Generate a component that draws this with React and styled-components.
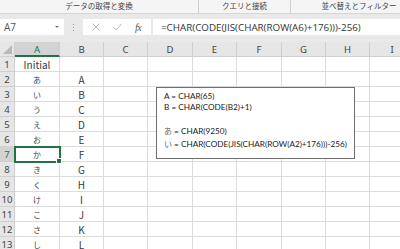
import React from "react";
import styled, { createGlobalStyle } from "styled-components";

const Global = createGlobalStyle`
  html, body { margin: 0; padding: 0; background: #ffffff; }
  body { width: 400px; height: 249px; overflow: hidden; }
`;

const Root = styled.div`
  position: relative;
  width: 400px;
  height: 249px;
  overflow: hidden;
  font-family: "Noto Sans CJK JP", "Noto Sans", sans-serif;
  background: #ffffff;
`;

const Ribbon = styled.div`
  display: flex;
  height: 13px;
  background: #f5f5f5;
  border-bottom: 1px solid #d6d6d6;
`;

const Group = styled.div`
  flex: 0 0 ${(p) => p.$w}px;
  display: flex;
  align-items: center;
  justify-content: center;
  font-size: 7.5px;
  color: #444;
  border-right: ${(p) => (p.$sep ? "1px solid #d0d0d0" : "none")};
  white-space: nowrap;
  line-height: 1;
  padding-bottom: 1px;
`;

const FormulaRow = styled.div`
  display: flex;
  align-items: flex-start;
  height: 28px;
  box-sizing: border-box;
  padding-top: 5px;
  background: #e9e9e9;
`;

const NameBox = styled.div`
  width: 64px;
  height: 16px;
  background: #fff;
  display: flex;
  align-items: center;
  justify-content: space-between;
  padding: 0 4px 0 4px;
  box-sizing: border-box;
  font-family: "Open Sans", "Noto Sans", sans-serif;
  font-size: 10px;
  color: #555;
`;

const Caret = styled.span`
  width: 0;
  height: 0;
  border-left: 2px solid transparent;
  border-right: 2px solid transparent;
  border-top: 2px solid #777;
  margin-right: 1px;
`;

const Grip = styled.div`
  width: 19px;
  height: 16px;
  display: flex;
  flex-direction: column;
  align-items: center;
  justify-content: center;
  gap: 2px;
`;

const Dot = styled.span`
  width: 1px;
  height: 1px;
  background: #9a9a9a;
`;

const IconBox = styled.div`
  width: 68px;
  height: 16px;
  background: #fff;
  display: flex;
  align-items: center;
  padding-left: 9px;
  box-sizing: border-box;
`;

const IconSlot = styled.span`
  width: ${(p) => p.$w}px;
  display: flex;
  align-items: center;
  justify-content: flex-start;
`;

const Fx = styled.span`
  font-family: "Liberation Serif", "DejaVu Serif", serif;
  font-style: italic;
  font-size: 10px;
  color: #555;
  letter-spacing: -0.5px;
`;

const FormulaInput = styled.div`
  flex: 1;
  margin-left: 2px;
  height: 16px;
  background: #fff;
  display: flex;
  align-items: center;
  padding-left: 8px;
  font-family: "Open Sans", "Noto Sans", sans-serif;
  font-size: 9.8px;
  color: #333;
  white-space: nowrap;
`;

const Sheet = styled.div`
  display: grid;
  grid-template-columns: 15px 45px 44px 44px 45px 44px 45px 44px 44px 45px;
  grid-auto-rows: 15px;
`;

const Corner = styled.div`
  position: relative;
  background: #e6e6e6;
  border-right: 1px solid #cfcfcf;
  border-bottom: 1px solid #cfcfcf;
  box-sizing: border-box;
  &::after {
    content: "";
    position: absolute;
    right: 2px;
    bottom: 2px;
    width: 0;
    height: 0;
    border-left: 9px solid transparent;
    border-bottom: 9px solid #b9b9b9;
  }
`;

const ColHead = styled.div`
  display: flex;
  align-items: center;
  justify-content: center;
  box-sizing: border-box;
  background: ${(p) => (p.$active ? "#d3d3d3" : "#e6e6e6")};
  border-right: 1px solid #cfcfcf;
  border-bottom: ${(p) => (p.$active ? "2px solid #217346" : "1px solid #cfcfcf")};
  color: ${(p) => (p.$active ? "#217346" : "#444")};
  font-family: "Noto Sans", sans-serif;
  font-size: 9.5px;
  padding-top: ${(p) => (p.$active ? "1px" : "0")};
`;

const RowHead = styled.div`
  display: flex;
  align-items: center;
  justify-content: center;
  box-sizing: border-box;
  background: ${(p) => (p.$active ? "#d3d3d3" : "#e6e6e6")};
  border-right: 1px solid #cfcfcf;
  border-bottom: 1px solid #cfcfcf;
  color: ${(p) => (p.$active ? "#217346" : "#444")};
  font-family: "Noto Sans", sans-serif;
  font-size: 9.5px;
`;

const Cell = styled.div`
  position: relative;
  display: flex;
  align-items: center;
  justify-content: center;
  box-sizing: border-box;
  border-right: 1px solid #dcdcdc;
  border-bottom: 1px solid #dcdcdc;
  font-family: "Noto Sans CJK JP", "Noto Sans", sans-serif;
  font-size: ${(p) => (p.$kana ? "8px" : "10px")};
  color: ${(p) => (p.$kana ? "#4a4a4a" : "#3a3a3a")};
  white-space: nowrap;
  ${(p) =>
    p.$selected &&
    `
    z-index: 2;
    outline: 2px solid #217346;
    outline-offset: -1px;
    &::after {
      content: "";
      position: absolute;
      right: -3px;
      bottom: -3px;
      width: 4px;
      height: 4px;
      background: #217346;
      border: 1px solid #fff;
    }
  `}
`;

const NoteBox = styled.div`
  position: absolute;
  left: 156px;
  top: 87px;
  width: 199px;
  height: 72px;
  box-sizing: border-box;
  background: #fff;
  border: 1px solid #6e6e6e;
  padding: 3px 0 0 7px;
  font-family: "Lato", "Noto Sans CJK JP", sans-serif;
  font-size: 8.2px;
  color: #222;
  z-index: 5;
`;

const NoteLine = styled.div`
  height: ${(p) => p.$h || 11}px;
  line-height: ${(p) => p.$h || 11}px;
  white-space: nowrap;
`;

const Kana = styled.span`
  font-family: "Noto Sans CJK JP", sans-serif;
  color: #666;
  font-size: 8px;
`;

const cols = ["A", "B", "C", "D", "E", "F", "G", "H", "I"];
const kana = ["Initial", "あ", "い", "う", "え", "お", "か", "き", "く", "け", "こ", "さ", "し"];
const latin = ["", "A", "B", "C", "D", "E", "F", "G", "H", "I", "J", "K", "L"];

const XIcon = () => (
  <svg width="8" height="8" viewBox="0 0 8 8">
    <path d="M0.5 0.5 L7.5 7.5 M7.5 0.5 L0.5 7.5" stroke="#b5b5b5" strokeWidth="1" fill="none" />
  </svg>
);

const CheckIcon = () => (
  <svg width="9" height="8" viewBox="0 0 9 8">
    <path d="M0.5 4.2 L3.2 7 L8.5 0.8" stroke="#b5b5b5" strokeWidth="1" fill="none" />
  </svg>
);

export default function App() {
  return (
    <Root>
      <Global />
      <Ribbon>
        <Group $w={198} $sep>データの取得と変換</Group>
        <Group $w={91} $sep>クエリと接続</Group>
        <Group $w={136}>並べ替えとフィルター</Group>
      </Ribbon>
      <FormulaRow>
        <NameBox>
          <span>A7</span>
          <Caret />
        </NameBox>
        <Grip>
          <Dot />
          <Dot />
          <Dot />
        </Grip>
        <IconBox>
          <IconSlot $w={21}>
            <XIcon />
          </IconSlot>
          <IconSlot $w={22}>
            <CheckIcon />
          </IconSlot>
          <IconSlot $w={14}>
            <Fx>fx</Fx>
          </IconSlot>
        </IconBox>
        <FormulaInput>=CHAR(CODE(JIS(CHAR(ROW(A6)+176)))-256)</FormulaInput>
      </FormulaRow>
      <Sheet>
        <Corner />
        {cols.map((c) => (
          <ColHead key={c} $active={c === "A"}>
            {c}
          </ColHead>
        ))}
        {kana.map((k, i) => (
          <React.Fragment key={i}>
            <RowHead $active={i === 6}>{i + 1}</RowHead>
            <Cell $selected={i === 6} $kana={i > 0}>
              {k}
            </Cell>
            <Cell>{latin[i]}</Cell>
            {cols.slice(2).map((c) => (
              <Cell key={c} />
            ))}
          </React.Fragment>
        ))}
      </Sheet>
      <NoteBox>
        <NoteLine>A = CHAR(65)</NoteLine>
        <NoteLine>B = CHAR(CODE(B2)+1)</NoteLine>
        <NoteLine />
        <NoteLine $h={13}>
          <Kana>あ</Kana> = CHAR(9250)
        </NoteLine>
        <NoteLine $h={13}>
          <Kana>い</Kana> = CHAR(CODE(JIS(CHAR(ROW(A2)+176)))-256)
        </NoteLine>
      </NoteBox>
    </Root>
  );
}
